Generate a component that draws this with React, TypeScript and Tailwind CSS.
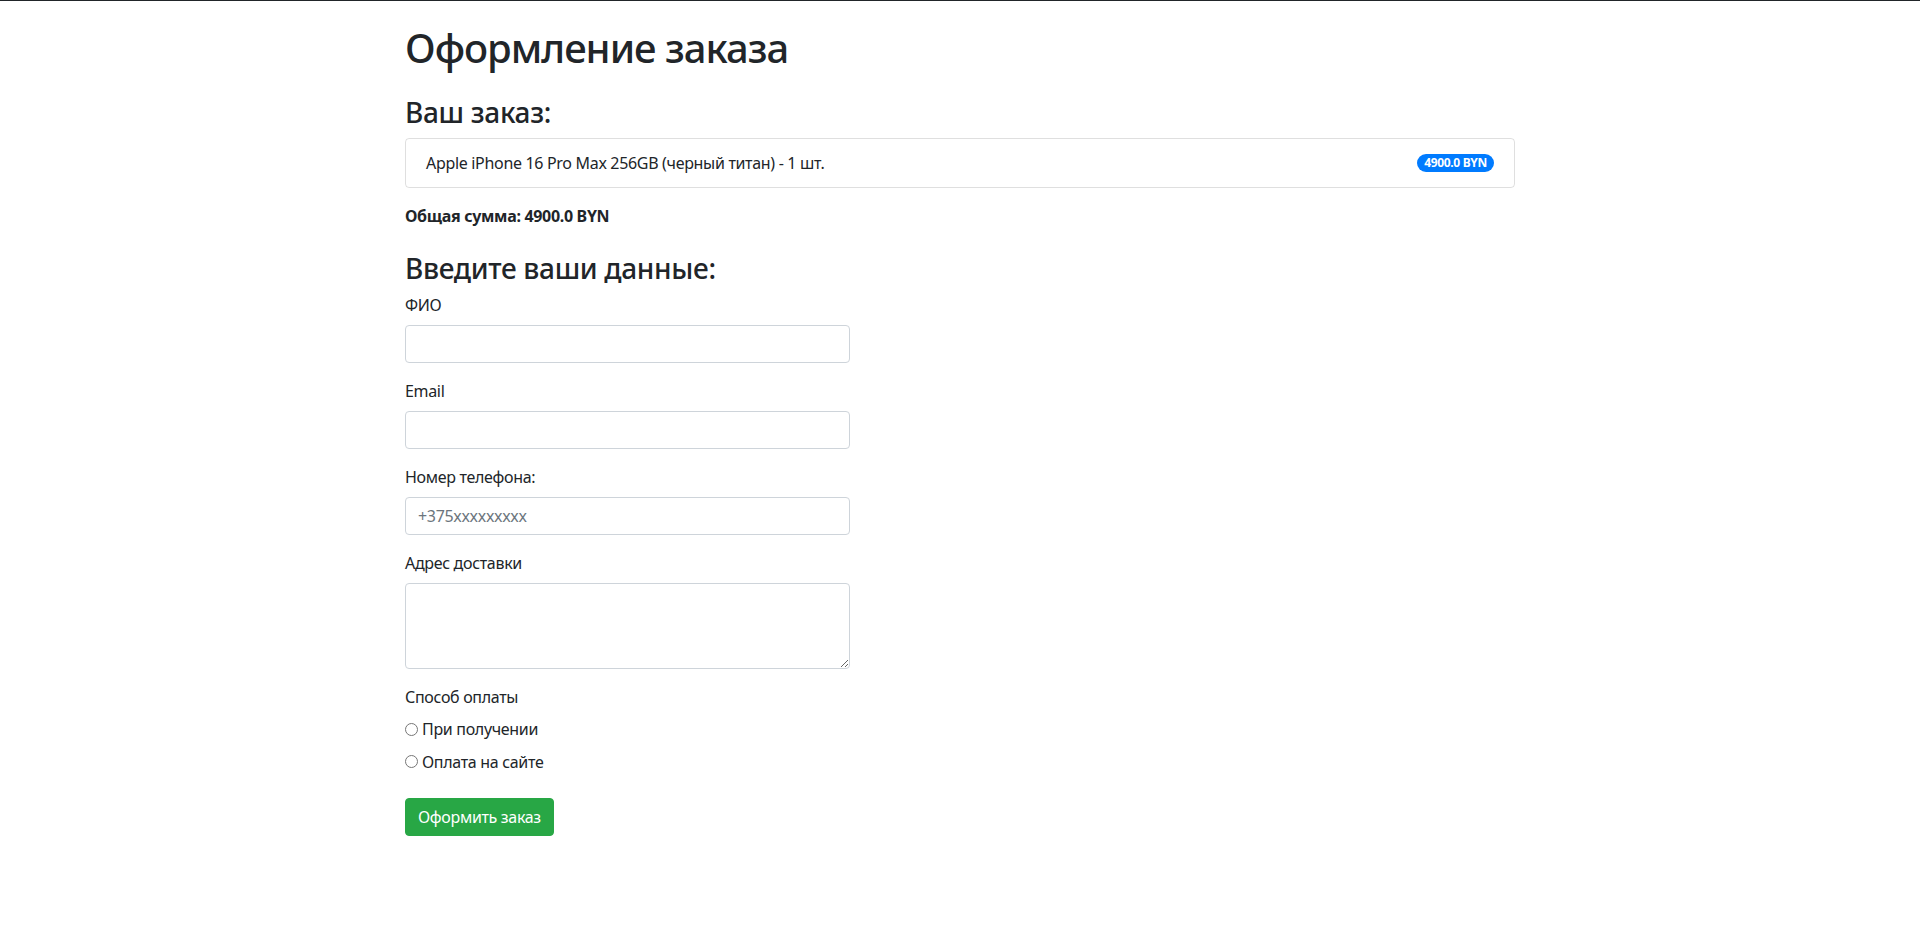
import React from "react";

const font = "font-['Segoe_UI','Noto_Sans','Open_Sans',sans-serif]";

const inputCls =
  "block w-full h-[38px] px-3 py-1.5 text-base leading-6 text-[#495057] bg-white border border-[#ced4da] rounded-[4px] outline-none placeholder:text-[#6c757d]";

function Field({ label, children }: { label: string; children: React.ReactNode }) {
  return (
    <div className="mb-4">
      <label className="inline-block mb-2">{label}</label>
      {children}
    </div>
  );
}

export default function App() {
  return (
    <div className={`min-h-screen bg-white border-t border-[#212529] text-base leading-6 tracking-[-0.02em] text-[#212529] ${font}`}>
      <div className="mx-auto w-[1140px] px-[15px] pt-[23px]">
        <h1 className="text-[40px] leading-[48px] font-medium tracking-[-0.025em] mb-2">Оформление заказа</h1>

        <h3 className="text-[28px] leading-[33.6px] font-medium mt-6 mb-2">Ваш заказ:</h3>
        <ul className="flex flex-col">
          <li className="flex items-center justify-between px-5 py-3 border border-black/[.125] rounded-[4px]">
            <span>Apple iPhone 16 Pro Max 256GB (черный титан) - 1 шт.</span>
            <span className="inline-block px-[7px] py-[3px] text-[12px] leading-3 font-bold text-white bg-[#007bff] rounded-full">
              4900.0 BYN
            </span>
          </li>
        </ul>
        <p className="mt-4 font-bold">Общая сумма: 4900.0 BYN</p>

        <h3 className="text-[28px] leading-[33.6px] font-medium mt-6 mb-2">Введите ваши данные:</h3>
        <form className="w-[445px]" onSubmit={(e) => e.preventDefault()}>
          <Field label="ФИО">
            <input type="text" className={inputCls} />
          </Field>
          <Field label="Email">
            <input type="email" className={inputCls} />
          </Field>
          <Field label="Номер телефона:">
            <input type="tel" placeholder="+375xxxxxxxxx" className={inputCls} />
          </Field>
          <Field label="Адрес доставки">
            <textarea
              rows={3}
              className="block w-full h-[86px] px-3 py-1.5 text-base leading-6 text-[#495057] bg-white border border-[#ced4da] rounded-[4px] outline-none resize-y"
            />
          </Field>
          <div className="mb-6">
            <label className="inline-block mb-2">Способ оплаты</label>
            <div className="mb-2">
              <label className="inline-flex items-center">
                <input type="radio" name="payment" className="m-0 mr-[4px] w-[13px] h-[13px]" />
                При получении
              </label>
            </div>
            <div className="mb-2">
              <label className="inline-flex items-center">
                <input type="radio" name="payment" className="m-0 mr-[4px] w-[13px] h-[13px]" />
                Оплата на сайте
              </label>
            </div>
          </div>
          <button
            type="submit"
            className="inline-block h-[38px] px-3 py-1.5 text-base leading-6 text-white bg-[#28a745] border border-[#28a745] rounded-[4px]"
          >
            Оформить заказ
          </button>
        </form>
      </div>
    </div>
  );
}
